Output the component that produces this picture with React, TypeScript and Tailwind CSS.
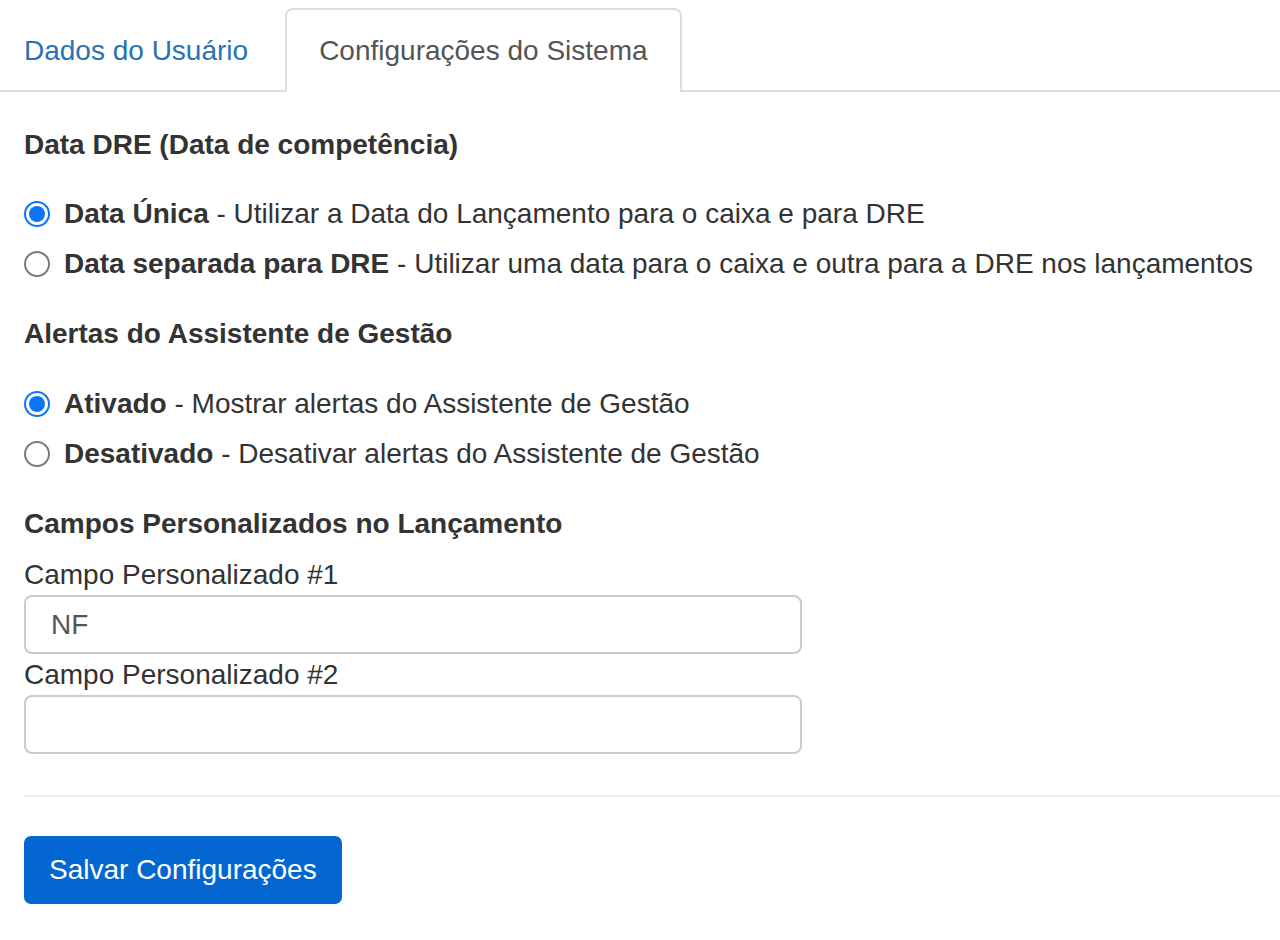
import { useState } from 'react'

function Radio({ checked, onClick }: { checked: boolean; onClick: () => void }) {
  return (
    <button
      type="button"
      onClick={onClick}
      className={
        checked
          ? 'w-[26px] h-[26px] rounded-full border-[2px] border-[#0b75f5] bg-white flex items-center justify-center shrink-0'
          : 'w-[26px] h-[26px] rounded-full border-[2px] border-[#7a7a7a] bg-white shrink-0'
      }
    >
      {checked && <span className="w-[16px] h-[16px] rounded-full bg-[#0b75f5]" />}
    </button>
  )
}

function Option({ checked, onClick, title, desc }: { checked: boolean; onClick: () => void; title: string; desc: string }) {
  return (
    <div className="h-[50px] flex items-center gap-[14px]">
      <Radio checked={checked} onClick={onClick} />
      <span className="text-[28px] text-[#333]">
        <b className="font-bold">{title}</b> - {desc}
      </span>
    </div>
  )
}

export default function App() {
  const [dre, setDre] = useState('unica')
  const [alerts, setAlerts] = useState('on')
  const [campo1, setCampo1] = useState('NF')
  const [campo2, setCampo2] = useState('')

  return (
    <div className="w-[1280px] min-h-[940px] bg-white" style={{ fontFamily: '"Liberation Sans", Arial, sans-serif' }}>
      {/* Tabs */}
      <div className="h-[92px] flex items-end border-b-2 border-[#ddd]">
        <div className="h-[82px] pl-[24px] pr-[31px] flex items-center text-[28px] text-[#2a72b5] mb-[-2px]">
          Dados do Usuário
        </div>
        <div className="ml-[6px] h-[84px] px-[32px] flex items-center text-[28px] text-[#555] bg-white border-2 border-b-0 border-[#ddd] rounded-t-[8px] mb-[-2px]">
          Configurações do Sistema
        </div>
      </div>

      <div className="px-[24px]">
        <div className="mt-[33px] h-[40px] flex items-center text-[28px] font-bold text-[#333]">
          Data DRE (Data de competência)
        </div>
        <div className="mt-[24px]">
          <Option checked={dre === 'unica'} onClick={() => setDre('unica')} title="Data Única" desc="Utilizar a Data do Lançamento para o caixa e para DRE" />
          <Option checked={dre === 'sep'} onClick={() => setDre('sep')} title="Data separada para DRE" desc="Utilizar uma data para o caixa e outra para a DRE nos lançamentos" />
        </div>

        <div className="mt-[25px] h-[40px] flex items-center text-[28px] font-bold text-[#333]">
          Alertas do Assistente de Gestão
        </div>
        <div className="mt-[25px]">
          <Option checked={alerts === 'on'} onClick={() => setAlerts('on')} title="Ativado" desc="Mostrar alertas do Assistente de Gestão" />
          <Option checked={alerts === 'off'} onClick={() => setAlerts('off')} title="Desativado" desc="Desativar alertas do Assistente de Gestão" />
        </div>

        <div className="mt-[25px] h-[40px] flex items-center text-[28px] font-bold text-[#333]">
          Campos Personalizados no Lançamento
        </div>
        <div className="mt-[11px] h-[40px] flex items-center text-[28px] text-[#333]">Campo Personalizado #1</div>
        <input
          value={campo1}
          onChange={e => setCampo1(e.target.value)}
          className="block w-[778px] h-[59px] px-[25px] text-[28px] text-[#555] border-2 border-[#ccc] rounded-[8px] outline-none"
        />
        <div className="mt-[1px] h-[40px] flex items-center text-[28px] text-[#333]">Campo Personalizado #2</div>
        <input
          value={campo2}
          onChange={e => setCampo2(e.target.value)}
          className="block w-[778px] h-[59px] px-[25px] text-[28px] text-[#555] border-2 border-[#ccc] rounded-[8px] outline-none"
        />
      </div>

      <div className="ml-[24px] mt-[41px] border-t-2 border-[#eee]" />

      <div className="px-[24px] mt-[39px]">
        <button className="h-[68px] px-[25px] rounded-[7px] bg-[#0366d1] text-white text-[28px]">
          Salvar Configurações
        </button>
      </div>
    </div>
  )
}
